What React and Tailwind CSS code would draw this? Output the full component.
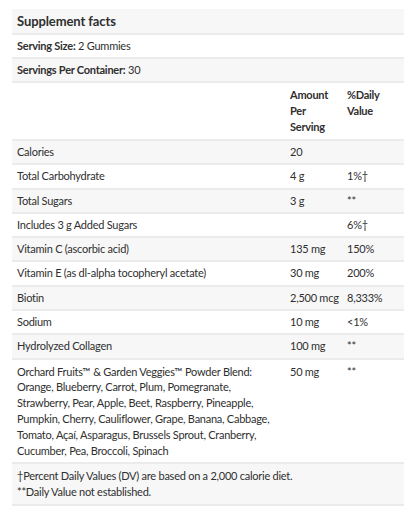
import React from "react";

const rows = [
  { name: "Calories", amount: "20", dv: "" },
  { name: "Total Carbohydrate", amount: "4 g", dv: "1%†" },
  { name: "Total Sugars", amount: "3 g", dv: "**" },
  { name: "Includes 3 g Added Sugars", amount: "", dv: "6%†" },
  { name: "Vitamin C (ascorbic acid)", amount: "135 mg", dv: "150%" },
  { name: "Vitamin E (as dl-alpha tocopheryl acetate)", amount: "30 mg", dv: "200%" },
  { name: "Biotin", amount: "2,500 mcg", dv: "8,333%" },
  { name: "Sodium", amount: "10 mg", dv: "<1%" },
  { name: "Hydrolyzed Collagen", amount: "100 mg", dv: "**" },
];

const blend = [
  "Orchard Fruits™ & Garden Veggies™ Powder Blend:",
  "Orange, Blueberry, Carrot, Plum, Pomegranate,",
  "Strawberry, Pear, Apple, Beet, Raspberry, Pineapple,",
  "Pumpkin, Cherry, Cauliflower, Grape, Banana, Cabbage,",
  "Tomato, Açaí, Asparagus, Brussels Sprout, Cranberry,",
  "Cucumber, Pea, Broccoli, Spinach",
];

export default function App() {
  return (
    <div className="w-[416px] h-[510px] bg-white pt-[9px] px-[12px] text-[#2f2f2f] text-[11px] tracking-[-0.25px] leading-[16px] font-['Lato','Liberation_Sans',sans-serif]">
      <table className="w-[392px] table-fixed border-collapse">
        <colgroup>
          <col className="w-[273px]" />
          <col className="w-[57px]" />
          <col className="w-[62px]" />
        </colgroup>
        <tbody>
          {/* Title and serving info */}
          <tr className="bg-[#f7f7f7] border-b-2 border-[#ebebeb]">
            <td colSpan={3} className="px-[5px] py-[4px] text-[13px] leading-[16px] tracking-[-0.1px] font-bold">
              Supplement facts
            </td>
          </tr>
          <tr className="border-b-2 border-[#ebebeb]">
            <td colSpan={3} className="px-[5px] py-[3px]">
              <span className="font-bold">Serving Size:</span> 2 Gummies
            </td>
          </tr>
          <tr className="bg-[#f7f7f7] border-b-2 border-[#ebebeb]">
            <td colSpan={3} className="px-[5px] py-[3px]">
              <span className="font-bold">Servings Per Container:</span> 30
            </td>
          </tr>

          {/* Column heads */}
          <tr className="border-b-2 border-[#ebebeb] align-top">
            <td className="px-[5px] py-[4px]"></td>
            <td className="px-[5px] py-[4px] font-bold">
              Amount
              <br />
              Per
              <br />
              Serving
            </td>
            <td className="px-[5px] py-[4px] font-bold">
              %Daily
              <br />
              Value
            </td>
          </tr>

          {rows.map((row, index) => (
            <tr
              key={index}
              className={`${index % 2 === 0 ? "bg-[#f7f7f7]" : "bg-white"} border-b-2 border-[#ebebeb] align-top`}
            >
              <td className="px-[5px] py-[3px] leading-[16.3px]">{row.name}</td>
              <td className="px-[5px] py-[3px] leading-[16.3px] whitespace-nowrap">{row.amount}</td>
              <td className="px-[5px] py-[3px] leading-[16.3px] whitespace-nowrap">{row.dv}</td>
            </tr>
          ))}

          <tr className="border-b-2 border-[#ebebeb] align-top">
            <td className="px-[5px] py-[4px] leading-[15.8px]">
              {blend.map((line, i) => (
                <div key={i} className="whitespace-nowrap">{line}</div>
              ))}
            </td>
            <td className="px-[5px] py-[4px] leading-[15.8px]">50 mg</td>
            <td className="px-[5px] py-[4px] leading-[15.8px]">**</td>
          </tr>

          {/* Footnotes */}
          <tr className="bg-[#f7f7f7] border-b-2 border-[#ebebeb]">
            <td colSpan={3} className="px-[5px] py-[4px]">
              †Percent Daily Values (DV) are based on a 2,000 calorie diet.
              <br />
              **Daily Value not established.
            </td>
          </tr>
        </tbody>
      </table>
    </div>
  );
}
